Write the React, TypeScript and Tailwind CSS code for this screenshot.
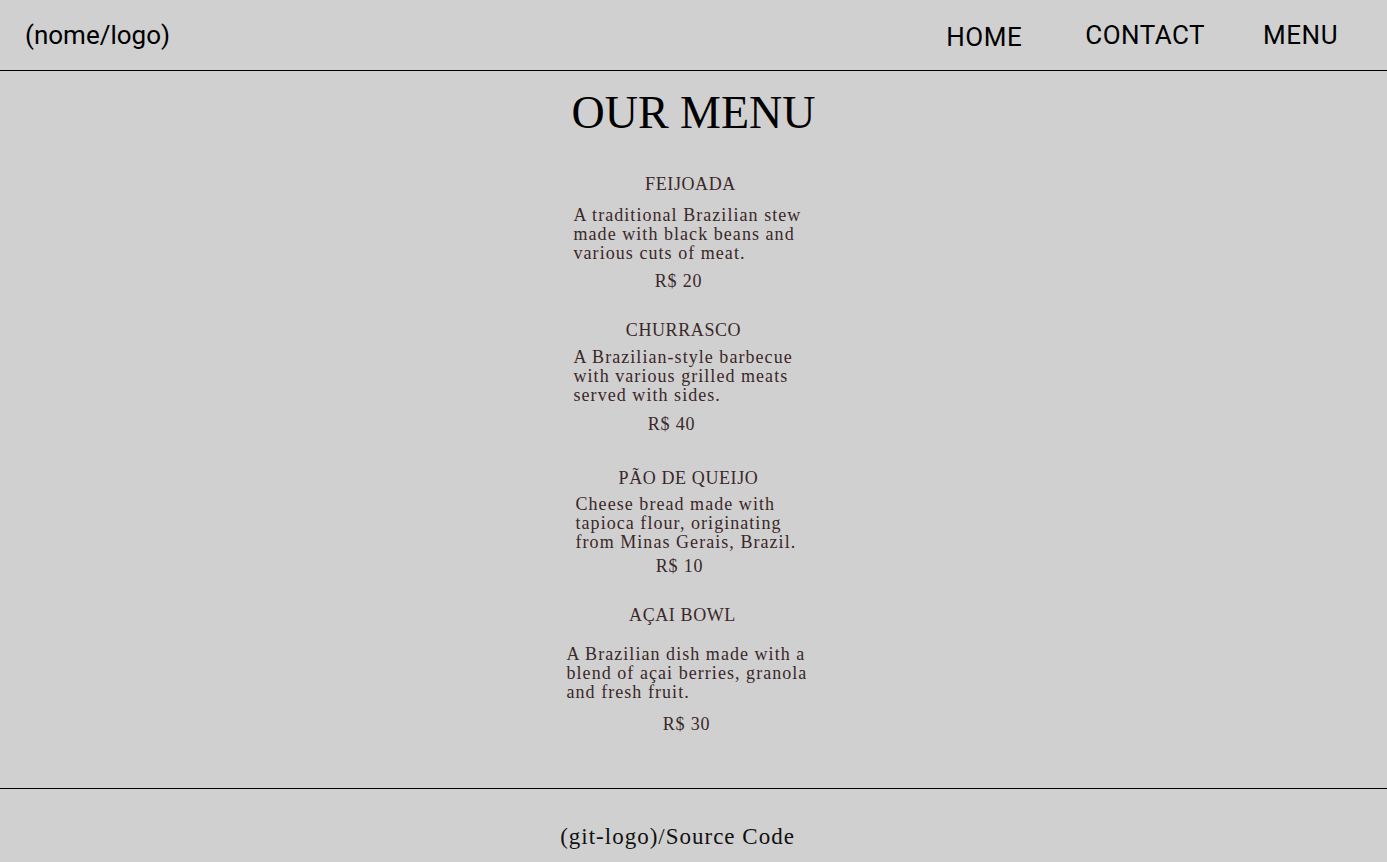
import React from "react";

type Item = {
  title: string;
  desc: string[];
  price: string;
  titleMt: string;
  titlePr: string;
  descMt: string;
  descPl: string;
  priceMt: string;
  pricePr: string;
};

const items: Item[] = [
  {
    title: "FEIJOADA",
    desc: ["A traditional Brazilian stew", "made with black beans and", "various cuts of meat."],
    price: "R$ 20",
    titleMt: "mt-[37px]",
    titlePr: "pr-[6px]",
    descMt: "mt-[12px]",
    descPl: "pl-[7px]",
    priceMt: "mt-[8px]",
    pricePr: "pr-[30px]",
  },
  {
    title: "CHURRASCO",
    desc: ["A Brazilian-style barbecue", "with various grilled meats", "served with sides."],
    price: "R$ 40",
    titleMt: "mt-[29px]",
    titlePr: "pr-[20px]",
    descMt: "mt-[8px]",
    descPl: "pl-[7px]",
    priceMt: "mt-[9px]",
    pricePr: "pr-[44px]",
  },
  {
    title: "PÃO DE QUEIJO",
    desc: ["Cheese bread made with", "tapioca flour, originating", "from Minas Gerais, Brazil."],
    price: "R$ 10",
    titleMt: "mt-[34px]",
    titlePr: "pr-[10px]",
    descMt: "mt-[7px]",
    descPl: "pl-[9px]",
    priceMt: "mt-[4px]",
    pricePr: "pr-[28px]",
  },
  {
    title: "AÇAI BOWL",
    desc: ["A Brazilian dish made with a", "blend of açai berries, granola", "and fresh fruit."],
    price: "R$ 30",
    titleMt: "mt-[29px]",
    titlePr: "pr-[22px]",
    descMt: "mt-[20px]",
    descPl: "pl-0",
    priceMt: "mt-[12px]",
    pricePr: "pr-[14px]",
  },
];

const serif = "font-['Liberation_Serif',serif]";

export default function App() {
  return (
    <div className="min-h-[862px] bg-[#d0d0d0] text-black flex flex-col">
      <header className="h-[71px] border-b border-black flex items-center justify-between pl-[25px] pr-[49px] font-['Roboto',sans-serif]">
        <div className="text-[26px] leading-none">(nome/logo)</div>
        <nav className="flex items-center gap-[58px] text-[26px] leading-none tracking-[0.5px]">
          <span className="mt-[3px] mr-[5px]">HOME</span>
          <span>CONTACT</span>
          <span>MENU</span>
        </nav>
      </header>

      <main className={`flex-1 flex flex-col items-center ${serif}`}>
        <h1 className="mt-[18px] text-[46px] leading-[48px] text-black">OUR MENU</h1>
        <div className="w-[254px] flex flex-col text-[#3b2828] mb-[54px]">
          {items.map((it) => (
            <div key={it.title} className="flex flex-col">
              <div className={`${it.titleMt} ${it.titlePr} text-center text-[18px] leading-[20px] tracking-[0.6px]`}>
                {it.title}
              </div>
              <div className={`${it.descMt} ${it.descPl} text-[18px] leading-[19px] tracking-[1.05px]`}>
                {it.desc.map((l) => (
                  <div key={l} className="whitespace-nowrap">{l}</div>
                ))}
              </div>
              <div className={`${it.priceMt} ${it.pricePr} text-center text-[18px] leading-[20px] tracking-[0.8px]`}>
                {it.price}
              </div>
            </div>
          ))}
        </div>
      </main>

      <footer className={`border-t border-black pt-[34px] pb-[11px] flex justify-center pr-[32px] ${serif}`}>
        <span className="text-[23px] leading-[28px] tracking-[1px] text-[#111]">(git-logo)/Source Code</span>
      </footer>
    </div>
  );
}
